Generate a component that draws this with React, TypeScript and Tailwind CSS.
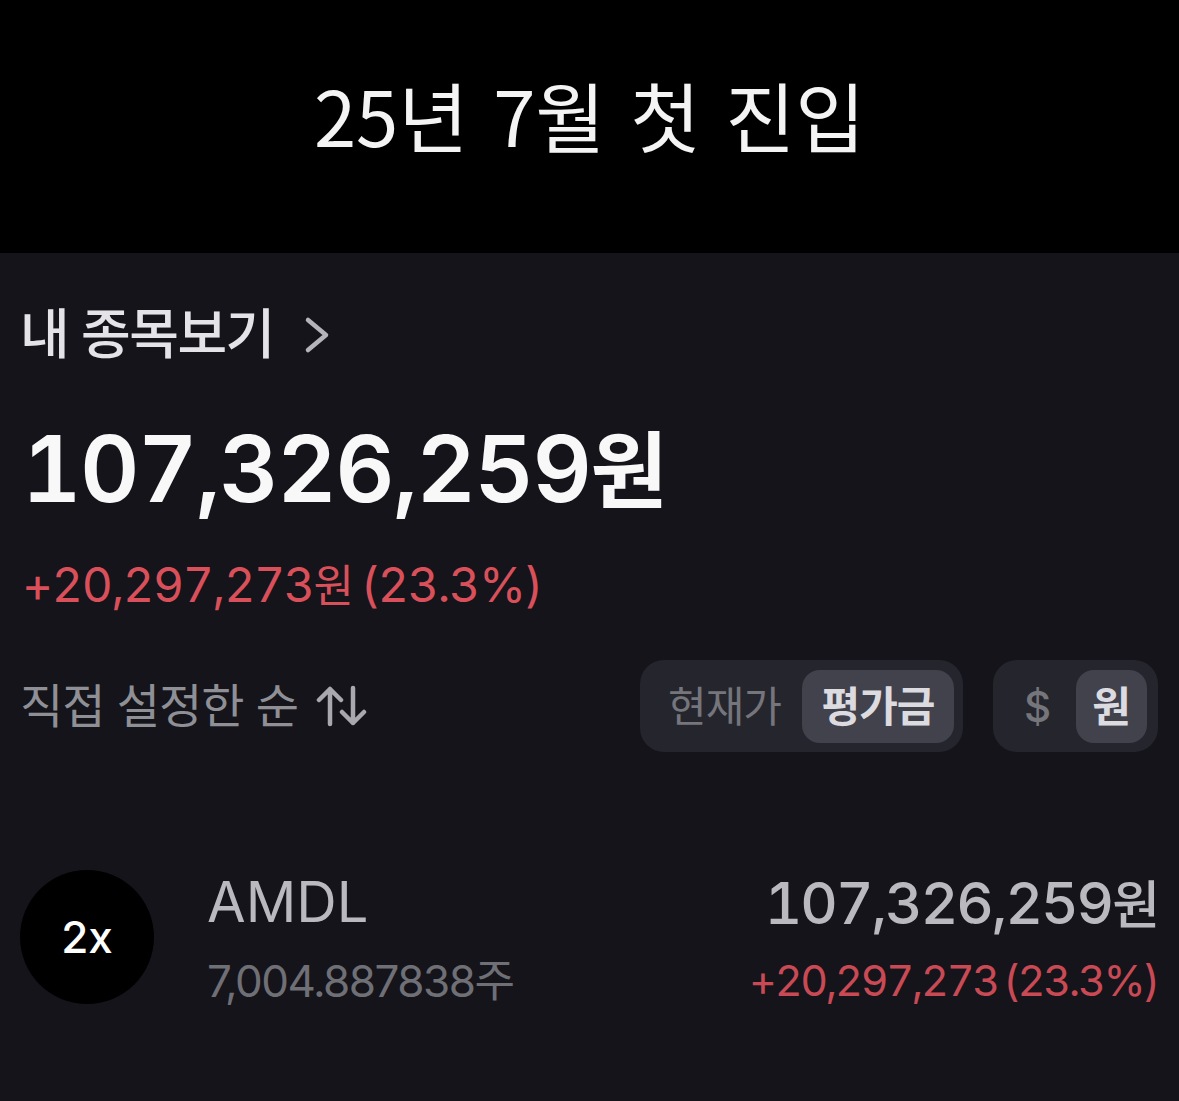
export default function App() {
  return (
    <div className="w-[1179px] h-[1101px] bg-[#14141a] overflow-hidden flex flex-col font-['Inter','Noto_Sans_CJK_KR',sans-serif]">
      <header className="h-[253px] bg-black flex items-start justify-center pt-[67px] shrink-0">
        <h1 className="text-[76px] leading-[94px] font-normal text-[#f4f4f4] [word-spacing:8px] font-['Noto_Sans_CJK_KR',sans-serif]">25년 7월 첫 진입</h1>
      </header>
      <main className="flex flex-col flex-1 pl-[22px] pr-[21px]">
        <div className="flex items-center -ml-[2px] mt-[52px] h-[60px] gap-[30px]">
          <span className="text-[54px] leading-[60px] font-medium text-[#e4e4e8] tracking-[-1.5px]">내 종목보기</span>
          <svg width="26" height="40" viewBox="0 0 26 40" fill="none" stroke="#b4b4ba" strokeWidth="4.5" strokeLinecap="round" strokeLinejoin="round"><path d="M4 5 L22 20 L4 35" /></svg>
        </div>
        <div className="mt-[54px] h-[100px] text-[92px] leading-[100px] font-semibold text-[#f8f8f8] tracking-[-1.5px] tabular-nums">107,326,259<span className="text-[84px]">원</span></div>
        <div className="mt-[36px] h-[60px] text-[48px] leading-[60px] text-[#d9505a] tracking-[-1.3px] [word-spacing:-4px] tabular-nums">+20,297,273<span className="text-[44px]">원</span> (23.3%)</div>
        <div className="flex items-center justify-between mt-[45px]">
          <div className="flex items-center -ml-[2px] gap-[18px]">
            <span className="text-[47px] leading-[56px] text-[#8f8f96] tracking-[-1px]">직접 설정한 순</span>
            <svg width="52" height="44" viewBox="0 0 52 44" fill="none" stroke="#a8a8ae" strokeWidth="4.5" strokeLinecap="round" strokeLinejoin="round"><path d="M14 40 V5 M3 16 L14 5 L25 16 M37 4 V39 M26 28 L37 39 L48 28" /></svg>
          </div>
          <div className="flex items-center gap-[30px]">
            <div className="flex items-center justify-between w-[323px] h-[92px] rounded-[24px] bg-[#25252e] pl-[28px] pr-[9px]">
              <span className="text-[42px] text-[#75757c] tracking-[-1px]">현재가</span>
              <span className="w-[152px] h-[73px] flex items-center justify-center rounded-[18px] bg-[#42424d] text-[42px] font-semibold text-[#dcdce0] tracking-[-1px]">평가금</span>
            </div>
            <div className="flex items-center justify-between w-[165px] h-[92px] rounded-[24px] bg-[#25252e] pl-[31px] pr-[11px]">
              <span className="text-[42px] font-medium text-[#75757c]">$</span>
              <span className="w-[71px] h-[73px] flex items-center justify-center rounded-[18px] bg-[#42424d] text-[42px] font-semibold text-[#dcdce0]">원</span>
            </div>
          </div>
        </div>
        <div className="flex items-start mt-[118px]">
          <div className="w-[134px] h-[134px] rounded-full bg-black flex items-center justify-center text-[44px] font-medium text-white -ml-[2px]">2x</div>
          <div className="flex flex-col ml-[53px] flex-1">
            <span className="text-[56px] leading-[64px] text-[#b9b9bf]">AMDL</span>
            <span className="text-[44px] leading-[56px] mt-[19px] text-[#6f6f76] tracking-[-1.5px]">7,004.887838주</span>
          </div>
          <div className="flex flex-col items-end">
            <span className="h-[66px] text-[58px] leading-[66px] font-medium text-[#b9b9bf] tracking-[-2px] tabular-nums">107,326,259<span className="text-[52px]">원</span></span>
            <span className="h-[56px] text-[43px] leading-[56px] mt-[16px] text-[#c94a54] tracking-[-2.3px] [word-spacing:-4px] tabular-nums">+20,297,273 (23.3%)</span>
          </div>
        </div>
      </main>
    </div>
  );
}
